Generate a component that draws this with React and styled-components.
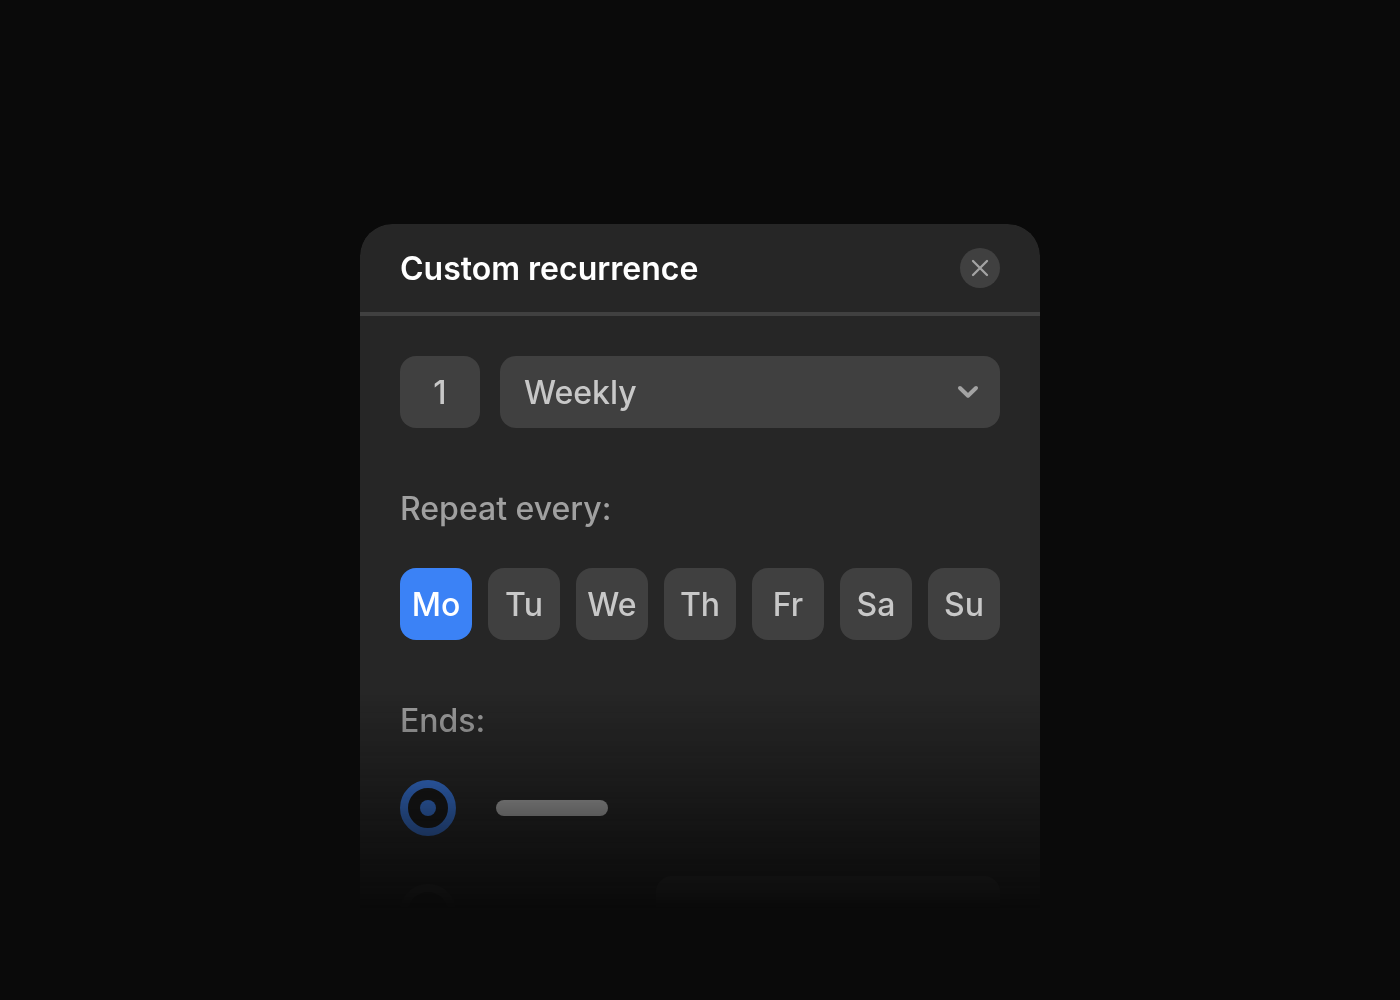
import React, { useState } from "react";
import styled, { createGlobalStyle } from "styled-components";

const GlobalStyle = createGlobalStyle`
  *, *::before, *::after { box-sizing: border-box; }
  body {
    margin: 0;
    background: #0a0a0a;
    font-family: Inter, "Liberation Sans", sans-serif;
    -webkit-font-smoothing: antialiased;
  }
  button, input, select { font: inherit; }
`;

const Page = styled.main`
  min-height: 100vh;
  padding: 224px 24px 0;
  display: flex;
  justify-content: center;
  align-items: flex-start;
  font-size: 32px;
  line-height: 38px;
  font-weight: 500;
  color: #c8c8c8;
`;

/* The lower part of the panel dissolves into the page background. */
const Panel = styled.form`
  width: 100%;
  max-width: 680px;
  border-radius: 32px 32px 0 0;
  background: #262626;
  mask-image: linear-gradient(to bottom, #000 468px, transparent 684px);
`;

const Header = styled.header`
  display: flex;
  align-items: center;
  justify-content: space-between;
  padding: 24px 40px;
  border-bottom: 4px solid #404040;
`;

const Title = styled.h1`
  margin: 0;
  padding-top: 2px;
  font-size: 32px;
  line-height: 38px;
  font-weight: 600;
  color: #fff;
`;

const CloseButton = styled.button`
  display: grid;
  place-items: center;
  width: 40px;
  height: 40px;
  padding: 0;
  border: 0;
  border-radius: 50%;
  background: #404040;
  color: #a3a3a3;
  cursor: pointer;
`;

const Body = styled.div`
  display: flex;
  flex-direction: column;
  gap: 60px;
  padding: 40px;
`;

const IntervalRow = styled.div`
  display: flex;
  gap: 20px;
`;

const CountInput = styled.input`
  width: 80px;
  height: 72px;
  padding: 0;
  border: 0;
  border-radius: 16px;
  background: #404040;
  color: inherit;
  text-align: center;
`;

const SelectWrap = styled.div`
  flex: ${(p) => (p.$width ? "none" : 1)};
  width: ${(p) => p.$width || "auto"};
  margin-left: ${(p) => (p.$end ? "auto" : 0)};
  display: grid;
  align-items: center;

  > * { grid-area: 1 / 1; }
  > svg {
    justify-self: end;
    margin-right: 20px;
    color: #a3a3a3;
    pointer-events: none;
  }
`;

const Select = styled.select`
  appearance: none;
  width: 100%;
  height: 72px;
  padding: 2px 64px 0 24px;
  border: 0;
  border-radius: 16px;
  background: #404040;
  color: inherit;
`;

const Section = styled.section`
  display: flex;
  flex-direction: column;
  gap: 40px;
`;

const SectionTitle = styled.h2`
  margin: 0;
  padding-top: 2px;
  font-size: 32px;
  line-height: 38px;
  font-weight: 500;
  color: #a0a0a0;
`;

const Days = styled.div`
  display: grid;
  grid-template-columns: repeat(7, 1fr);
  gap: 16px;
`;

const DayButton = styled.button`
  height: 72px;
  padding: 2px 0 0;
  border: 0;
  border-radius: 16px;
  background: ${(p) => (p.$active ? "#3b82f6" : "#404040")};
  color: ${(p) => (p.$active ? "#fff" : "inherit")};
  text-align: center;
  cursor: pointer;
`;

const EndRow = styled.div`
  display: flex;
  align-items: center;
`;

const EndLabel = styled.label`
  display: flex;
  align-items: center;
  gap: 40px;
`;

const Radio = styled.input`
  appearance: none;
  display: grid;
  place-items: center;
  width: 56px;
  height: 56px;
  margin: 0;
  border: 8px solid #404040;
  border-radius: 50%;
  background: #171717;

  &:checked { border-color: #3b82f6; }
  &:checked::before {
    content: "";
    width: 16px;
    height: 16px;
    border-radius: 50%;
    background: #3b82f6;
  }
`;

const LabelBar = styled.span`
  width: ${(p) => p.$width};
  height: 16px;
  border-radius: 8px;
  background: #c8c8c8;
`;

const CloseIcon = () => (
  <svg width="20" height="20" viewBox="0 0 20 20" fill="none" aria-hidden="true">
    <path d="M3 3 17 17M17 3 3 17" stroke="currentColor" strokeWidth="2.3" strokeLinecap="round" />
  </svg>
);

const Chevron = () => (
  <svg width="24" height="24" viewBox="0 0 24 24" fill="none" aria-hidden="true">
    <path d="m4 8 8 7.7L20 8" stroke="currentColor" strokeWidth="4" strokeLinecap="round" strokeLinejoin="round" />
  </svg>
);

const DAYS = ["Mo", "Tu", "We", "Th", "Fr", "Sa", "Su"];

export default function App() {
  const [count, setCount] = useState("1");
  const [selected, setSelected] = useState(["Mo"]);
  const [ends, setEnds] = useState("never");

  const toggle = (day) =>
    setSelected((days) => (days.includes(day) ? days.filter((d) => d !== day) : [...days, day]));

  return (
    <>
      <GlobalStyle />
      <Page>
        <Panel onSubmit={(e) => e.preventDefault()}>
          <Header>
            <Title>Custom recurrence</Title>
            <CloseButton type="button" aria-label="Close">
              <CloseIcon />
            </CloseButton>
          </Header>
          <Body>
            <IntervalRow>
              <CountInput
                aria-label="Interval"
                inputMode="numeric"
                value={count}
                onChange={(e) => setCount(e.target.value)}
              />
              <SelectWrap>
                <Select aria-label="Frequency" defaultValue="Weekly">
                  <option>Weekly</option>
                </Select>
                <Chevron />
              </SelectWrap>
            </IntervalRow>
            <Section>
              <SectionTitle id="repeat">Repeat every:</SectionTitle>
              <Days role="group" aria-labelledby="repeat">
                {DAYS.map((day) => (
                  <DayButton
                    key={day}
                    type="button"
                    $active={selected.includes(day)}
                    aria-pressed={selected.includes(day)}
                    onClick={() => toggle(day)}
                  >
                    {day}
                  </DayButton>
                ))}
              </Days>
            </Section>
            <Section role="radiogroup" aria-labelledby="ends">
              <SectionTitle id="ends">Ends:</SectionTitle>
              <EndRow>
                <EndLabel>
                  <Radio
                    type="radio"
                    name="ends"
                    aria-label="Never"
                    checked={ends === "never"}
                    onChange={() => setEnds("never")}
                  />
                  <LabelBar $width="112px" />
                </EndLabel>
              </EndRow>
              <EndRow>
                <EndLabel>
                  <Radio
                    type="radio"
                    name="ends"
                    aria-label="On date"
                    checked={ends === "date"}
                    onChange={() => setEnds("date")}
                  />
                </EndLabel>
                <SelectWrap $width="344px" $end>
                  <Select aria-label="End date" />
                </SelectWrap>
              </EndRow>
            </Section>
          </Body>
        </Panel>
      </Page>
    </>
  );
}
